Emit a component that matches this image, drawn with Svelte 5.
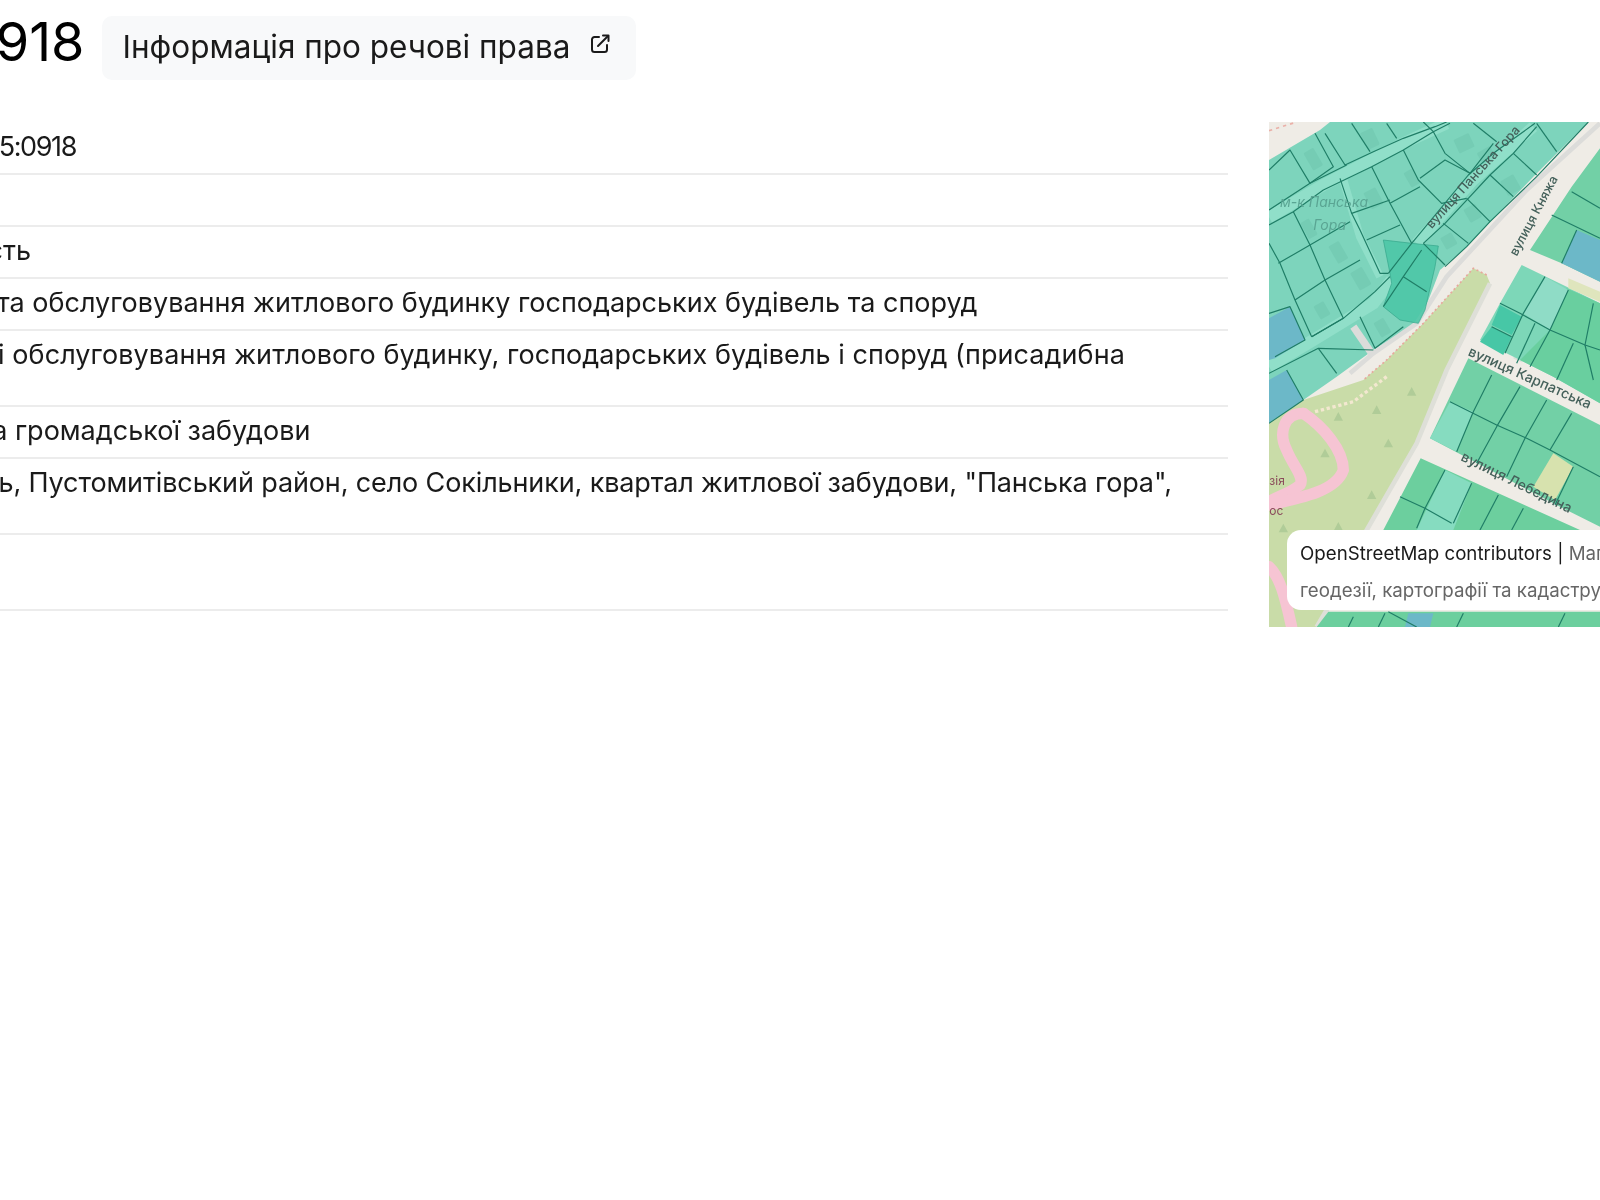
<script>
  // Row data for the parcel table
  const rows = [
    { label: 'Кадастровий номер', value: '4623686400:05:005:0918', tracking: -1.4 },
    { label: 'Площа', value: '' },
    { label: 'Форма власності', value: 'Приватна власність' },
    { label: 'Цільове призначення', value: 'Для будівництва та обслуговування житлового будинку господарських будівель та споруд' },
    { label: 'Вид використання', value: 'Для будівництва і обслуговування житлового будинку, господарських будівель і споруд (присадибна ділянка)', tracking: 0.07 },
    { label: 'Категорія земель', value: 'Землі житлової та громадської забудови' },
    { label: 'Адреса', value: 'Львівська область, Пустомитівський район, село Сокільники, квартал житлової забудови, "Панська гора", ділянка 25', tracking: -0.13 },
    { label: 'Дата державної реєстрації', value: '' }
  ];

  const treePoints = [
    [455, 845], [350, 900], [235, 920], [385, 1000], [195, 1030], [335, 1155], [70, 1255], [235, 1250]
  ];

  // Faint house footprints: x, y, w, h, angle
  const houses = [
    [130, 130, 34, 60, -30], [300, 70, 40, 55, -25], [580, 90, 50, 45, -25], [430, 190, 30, 50, -30],
    [310, 250, 40, 55, -28], [120, 340, 30, 55, -30], [205, 410, 35, 60, -30], [270, 490, 40, 60, -30],
    [650, 130, 45, 40, -30], [720, 215, 45, 50, -30], [610, 300, 40, 45, -30], [540, 385, 38, 40, -30],
    [340, 640, 34, 50, -30], [160, 590, 34, 45, -30], [650, 960, 55, 50, 25], [780, 700, 30, 50, 25]
  ];

  // Parcel boundaries, in the map's own units (3 units = 1 px)
  const parcelLines = [
    '27,180 90,120 150,220 220,170 165,70',
    '195,70 255,165 340,125 430,85 525,50 560,36',
    '275,40 330,125', '380,40 410,85', '490,36 520,65',
    '27,300 150,220 260,165',
    '27,345 100,305 190,240 335,170 430,120 520,65 570,40',
    '335,170 390,280 455,400',
    '430,120 475,210 545,280 620,265',
    '480,205 555,150 630,190',
    '520,65 555,130 630,190 700,100',
    '640,40 710,95',
    '240,205 275,310 300,360 360,490 385,490',
    '390,280 480,230',
    '275,310 390,270',
    '320,390 420,345',
    '100,305 150,405 195,510 250,625 155,680',
    '55,460 150,405 270,335',
    '105,570 195,510 300,450',
    '27,400 60,460 105,570 155,680',
    '27,610 90,590 135,690 45,740',
    '155,680 250,625 345,545 390,500',
    '175,715 230,790',
    '300,620 345,715 430,650',
    '825,40 700,130 625,195 455,400 385,490',
    '830,50 760,130 690,195 625,265 555,340 490,400',
    '830,40 890,125', '760,130 830,195', '690,195 760,260', '620,265 690,335',
    '550,340 625,400', '490,400 555,465',
    '985,36 830,200 690,335 620,410 555,470',
    '27,790 175,715 340,720',
    '80,780 130,870 27,940',
    // right of the main road
    '935,245 1020,295', '875,315 1020,385', '950,360 905,460',
    '720,580 780,610 870,660 975,705 1020,720',
    '855,500 790,610 735,730',
    '925,540 870,660 810,770',
    '1000,580 975,705 1000,810',
    '695,650 755,680', '825,640 770,760', '940,700 890,810',
    '570,875 710,945 800,985 870,1020 1020,1100',
    '695,795 640,905 590,1025',
    '780,830 710,950 650,1060',
    '860,870 795,985 740,1100',
    '935,910 870,1020',
    '940,1070 885,1185',
    '420,1160 495,1195 575,1240',
    '555,1080 495,1195 470,1255',
    '635,1120 580,1240',
    '715,1155 660,1260',
    '790,1195 755,1260',
    // strip under the attribution panel
    '280,1520 265,1551', '375,1510 355,1551', '610,1510 590,1551', '915,1510 895,1551', '385,1505 470,1551'
  ];
</script>

<div class="page">
  <header class="head">
    <h1>4623686400:05:005:0918</h1>
    <a class="rights" href="#rights">
      Інформація про речові права
      <svg width="24" height="24" viewBox="0 0 24 24" fill="none" stroke="currentColor" stroke-width="2" stroke-linecap="round" stroke-linejoin="round">
        <path d="M11 5H6.500A2.500 2.500 0 0 0 4 7.500V17.500A2.500 2.500 0 0 0 6.500 20H16.500A2.500 2.500 0 0 0 19 17.500V13" />
        <path d="M10 14L20 4" />
        <path d="M15 3.500H20.500V9" />
      </svg>
    </a>
  </header>

  <div class="body">
    <dl class="table">
      {#each rows as row}
        <div class="row">
          <dt>{row.label}</dt>
          <dd style:letter-spacing={row.tracking ? `${row.tracking}px` : null}>{row.value}</dd>
        </div>
      {/each}
    </dl>

    <div class="map">
      <svg class="map-art" viewBox="27 36 1515 1515" width="505" height="505">
        <rect x="27" y="36" width="1515" height="1515" fill="#efece6" />

        <!-- left residential block -->
        <polygon fill="#7dd4bc" points="27,150 180,60 210,36 985,36 820,200 620,410 540,480 490,610 470,640 340,720 230,800 130,870 27,940" />
        <path d="M27,322 L190,225 L430,100 L560,40" fill="none" stroke="#90dfc9" stroke-width="36" />
        <path d="M360,500 L300,380 L250,210" fill="none" stroke="#90dfc9" stroke-width="24" />
        <path d="M27,770 L160,690 L340,580 L395,510" fill="none" stroke="#90dfc9" stroke-width="36" />
        <path d="M470,400 L640,210 L820,50" fill="none" stroke="#90dfc9" stroke-width="34" />
        <polygon fill="#6cb8c8" points="27,625 90,590 135,690 45,745 27,750" />
        <polygon fill="#6cb8c8" points="27,810 80,780 130,870 27,940" />

        {#each houses as [x, y, w, h, a]}
          <rect {x} {y} width={w} height={h} rx="4" fill="#2d8b73" fill-opacity="0.1" transform="rotate({a} {x} {y})" />
        {/each}

        <!-- road casing -->
        <path d="M270,790 L340,730 L470,640 L560,500 L800,240 L1020,40" fill="none" stroke="#dcdcda" stroke-width="14" />
        <path d="M280,650 L335,730" fill="none" stroke="#dcdcda" stroke-width="22" />

        <!-- park -->
        <polygon fill="#c9dca8" points="680,495 640,475 590,530 490,640 380,750 310,810 130,870 27,940 27,1551 170,1551 200,1500 320,1260 470,1000 560,780 650,600 690,520" />
        <path d="M680,495 L640,475 L590,530 L490,640 L380,750 L310,810" fill="none" stroke="#e8a79c" stroke-width="5" stroke-dasharray="6 8" />
        <path d="M165,905 L280,875 L380,800" fill="none" stroke="#f3e8d0" stroke-width="10" stroke-dasharray="10 8" />
        <path d="M27,62 L110,36" fill="none" stroke="#eab0a8" stroke-width="5" stroke-dasharray="10 12" />
        <path d="M690,520 L560,780 L470,1000 L320,1260 L200,1500 L170,1551" fill="none" stroke="#dedfd8" stroke-width="14" />

        {#each treePoints as [x, y]}
          <polygon fill="#b0cc98" points="{x},{y - 14} {x + 14},{y + 12} {x - 14},{y + 12}" />
        {/each}

        <!-- footpath loop -->
        <g fill="none" stroke="#f6c4d3" stroke-width="34" stroke-linecap="round">
          <path d="M130,910 C70,910 55,970 80,1020 C100,1070 135,1100 120,1125 C90,1150 50,1160 27,1175" />
          <path d="M130,910 C190,950 250,1020 250,1080 C230,1140 140,1160 27,1185" />
          <path d="M27,1370 C60,1400 75,1460 95,1551" />
        </g>
        <text class="poi" x="28" y="1125">зія</text>
        <text class="poi" x="28" y="1215">ос</text>

        <!-- blocks right of the main road -->
        <polygon fill="#72d0a6" points="1020,115 935,230 810,420 905,460 1020,515" />
        <polygon fill="#6cb8c8" points="950,360 1020,390 1020,515 905,460" />
        <polygon fill="#7dd7b8" points="785,465 920,530 1020,580 1020,880 880,800 660,690 720,580" />
        <polygon fill="#69cf9f" points="920,535 1020,580 1020,880 880,800 780,750 870,660" />
        <polygon fill="#8fdcc6" points="855,500 925,540 870,660 790,610" />
        <polygon fill="#47c7a6" points="720,585 785,620 755,675 695,645" />
        <polygon fill="#47c7a6" points="695,650 755,680 730,735 660,695" />
        <polygon fill="#dfe5bd" points="925,505 1020,545 1020,575 925,535" />
        <polygon fill="#72d0a6" points="625,745 1020,945 1020,1250 900,1190 510,985" />
        <polygon fill="#86dcc0" points="570,875 640,905 590,1025 510,985" />
        <polygon fill="#d7e2ae" points="880,1030 940,1070 885,1170 820,1130" />
        <polygon fill="#6ccf9e" points="482,1045 370,1260 1020,1260 1020,1290 960,1260" />
        <polygon fill="#86dcc0" points="555,1080 635,1120 580,1260 470,1260" />
        <polygon fill="#6ccf9e" points="205,1505 1020,1505 1020,1551 170,1551" />
        <polygon fill="#6cb8c8" points="445,1510 520,1510 510,1551 435,1551" />

        <!-- selected parcel -->
        <polygon fill="#4dc7a6" fill-opacity="0.9" stroke="#34a58a" stroke-width="2" points="370,390 455,400 535,408 525,470 495,600 475,640 420,630 370,590 395,520 390,490" />

        <g fill="none" stroke="#1f7d66" stroke-width="3.500" stroke-linejoin="round">
          {#each parcelLines as points}
            <polyline {points} />
          {/each}
          <path d="M430,500 L500,545" />
          <path d="M485,420 L430,500 L370,590" />
        </g>

        <!-- street labels -->
        <text class="street" transform="translate(770,440) rotate(-62)">вулиця Княжа</text>
        <text class="street" transform="translate(515,358) rotate(-48)">вулиця Панська Гора</text>
        <text class="street wide" transform="translate(622,735) rotate(24)">вулиця Карпатська</text>
        <text class="street wide" transform="translate(600,1050) rotate(26)">вулиця Лебедина</text>
        <text class="quarter" x="60" y="290">м-к Панська</text>
        <text class="quarter" x="160" y="360">Гора</text>
      </svg>

      <div class="attribution">
        <div class="attr-line"><span class="osm">OpenStreetMap contributors</span> <b>|</b> Мапа: Державна служба України з питань</div>
        <div class="attr-line">геодезії, картографії та кадастру</div>
      </div>
    </div>
  </div>
</div>

<style>
  :global(body) {
    margin: 0;
    background: #fff;
    overflow: hidden;
  }

  .page {
    width: 2200px;
    margin-left: -531px;
    padding-top: 16px;
    font-family: Inter, "Liberation Sans", sans-serif;
    color: #1a1a1a;
    filter: blur(0.4px);
  }

  .head {
    display: flex;
    align-items: center;
    gap: 20px;
    height: 64px;
    margin-bottom: 42px;
    margin-left: -60px;
  }

  h1 {
    margin: 0;
    padding-bottom: 13px;
    font-size: 54px;
    font-weight: 400;
    line-height: 51px;
    color: #000;
    white-space: nowrap;
  }

  .rights {
    display: flex;
    align-items: center;
    gap: 18px;
    height: 64px;
    width: 534px;
    margin-left: -3px;
    box-sizing: border-box;
    padding: 0 0 4px 21px;
    border-radius: 10px;
    background: #f8f9fa;
    font-size: 31.500px;
    color: #1a1a1a;
    text-decoration: none;
    white-space: nowrap;
  }

  .rights svg {
    margin-top: -4px;
  }

  .body {
    display: flex;
    gap: 41px;
    align-items: flex-start;
  }

  .table {
    width: 1759px;
    margin: 1px 0 0;
    flex: none;
  }

  .row {
    display: flex;
    padding: 12px 0 14px;
    border-bottom: 2px solid #ececec;
    font-size: 27px;
    line-height: 24px;
  }

  dt {
    width: 300px;
    flex: none;
    color: #666;
  }

  dd {
    margin: 0;
    min-height: 24px;
    padding-right: 20px;
  }

  .map {
    position: relative;
    width: 505px;
    height: 505px;
    flex: none;
    overflow: hidden;
  }

  .map-art {
    display: block;
    filter: blur(0.4px);
  }

  .street {
    font-size: 38px;
    fill: #44605a;
    font-weight: 500;
  }

  .street.wide {
    font-size: 42px;
  }

  .quarter {
    font-size: 42px;
    font-style: italic;
    fill: #5aa593;
  }

  .poi {
    font-size: 36px;
    fill: #8a4a5a;
  }

  .attribution {
    position: absolute;
    left: 18px;
    right: 18px;
    top: 408px;
    height: 80px;
    padding: 5px 13px;
    box-sizing: border-box;
    border-radius: 14px;
    background: #fff;
    font-size: 18.700px;
    line-height: 37px;
    color: #666;
    white-space: nowrap;
  }

  .attr-line {
    height: 37px;
  }

  .osm,
  .attr-line b {
    color: #1a1a1a;
    font-weight: 400;
  }
</style>
